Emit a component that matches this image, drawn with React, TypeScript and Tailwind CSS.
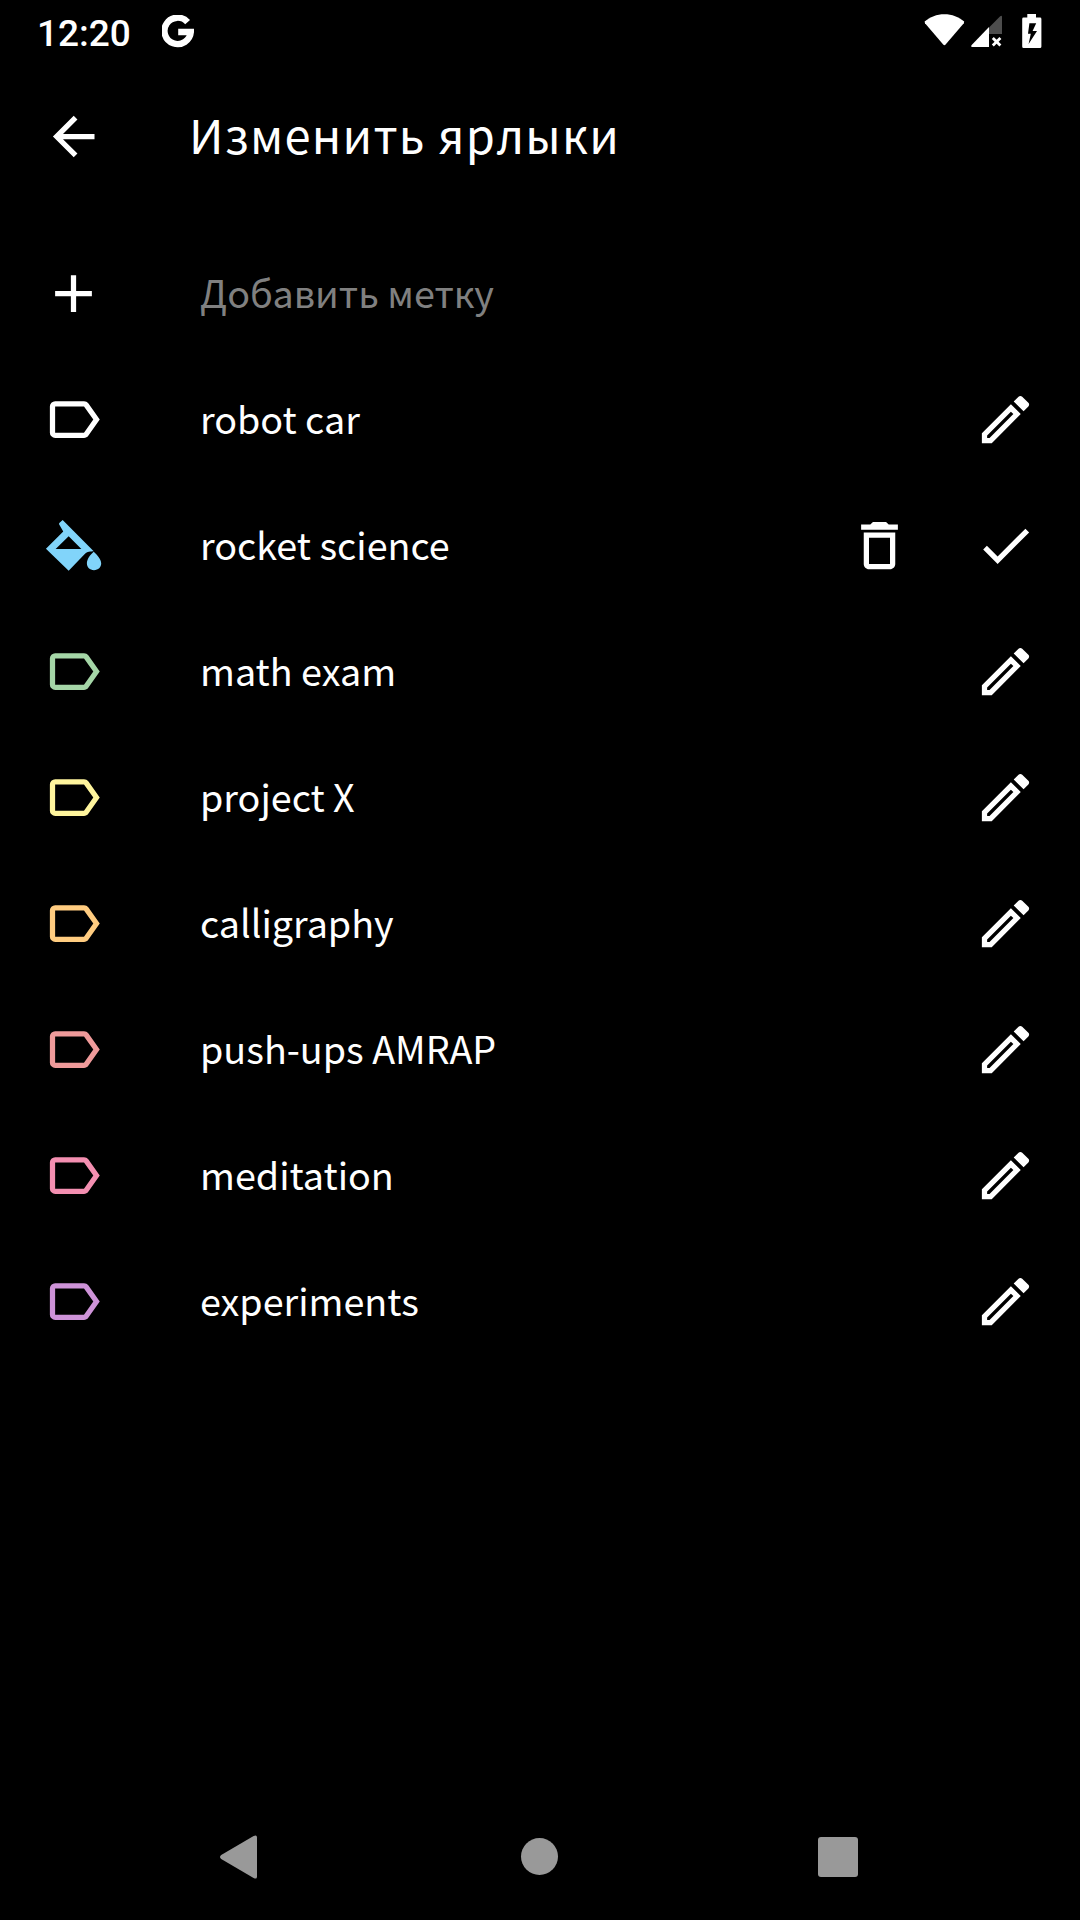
import React from 'react';

type Label = {
  name: string;
  color: string;
  active?: boolean;
};

const labels: Label[] = [
  { name: 'robot car', color: 'text-white' },
  { name: 'rocket science', color: 'text-[#81d4fa]', active: true },
  { name: 'math exam', color: 'text-[#a5d6a7]' },
  { name: 'project X', color: 'text-[#fff59d]' },
  { name: 'calligraphy', color: 'text-[#ffcc80]' },
  { name: 'push-ups AMRAP', color: 'text-[#ef9a9a]' },
  { name: 'meditation', color: 'text-[#f48fb1]' },
  { name: 'experiments', color: 'text-[#ce93d8]' },
];

const icons = {
  back: 'M20,11V13H8L13.5,18.5L12.08,19.92L4.16,12L12.08,4.08L13.5,5.5L8,11H20Z',
  plus: 'M19,13H13V19H11V13H5V11H11V5H13V11H19V13Z',
  label: 'M16,17H5V7H16L19.55,12M17.63,5.84C17.27,5.33 16.67,5 16,5H5A2,2 0 0,0 3,7V17A2,2 0 0,0 5,19H16C16.67,19 17.27,18.66 17.63,18.15L22,12L17.63,5.84Z',
  fill: 'M7.87,2.25L19.7,14.2C18.4,14.3 17.3,14.2 16.2,15.3L10.16,21.6L1.5,13.2L8.1,6.7L6.5,3.9Q6.4,3.6 6.7,3.3ZM10.16,8.5L5.2,13.3H15ZM19.7,14.4C21,15.6 22.55,17.2 22.55,18.8C22.55,20.4 21.4,21.4 19.8,21.4S17.1,20.4 17.1,18.8C17.1,17.2 18.4,15.5 19.7,14.4Z',
  edit: 'M14.06,9L15,9.94L5.92,19H5V18.08L14.06,9M17.66,3C17.41,3 17.15,3.1 16.96,3.29L15.13,5.12L18.88,8.87L20.71,7.04C21.1,6.65 21.1,6 20.71,5.63L18.37,3.29C18.17,3.09 17.92,3 17.66,3M14.06,6.19L3,17.25V21H6.75L17.81,9.94L14.06,6.19Z',
  trash: 'M6,19C6,20.1 6.9,21 8,21H16C17.1,21 18,20.1 18,19V7H6V19M8,9H16V19H8V9M15.5,4L14.5,3H9.5L8.5,4H5V6H19V4H15.5Z',
  check: 'M21,7L9,19L3.5,13.5L4.91,12.09L9,16.17L19.59,5.59L21,7Z',
};

function Icon({ name }: { name: keyof typeof icons }) {
  return (
    <svg viewBox="0 0 24 24" className="size-[63px] shrink-0" fill="currentColor" fillRule="evenodd">
      <path d={icons[name]} />
    </svg>
  );
}

function StatusBar() {
  return (
    <div className="flex h-[63px] shrink-0 items-start justify-between pl-[37px] pr-[38px]">
      <div className="flex items-start">
        <span className="w-[125px] pt-[11px] font-['Roboto',sans-serif] text-[37px] leading-[46px] font-medium">12:20</span>
        <svg viewBox="0 0 32 33" className="mt-[15px] h-[33px] w-8" fill="none" stroke="currentColor" strokeWidth="6.4">
          <path d="M25.6 7.2A13.2 13.2 0 1 0 28.8 17H16.2" />
        </svg>
      </div>
      <div className="flex items-start">
        <svg viewBox="0 0 41 32" className="mt-[14px] h-8 w-[41px]" fill="currentColor">
          <path d="M0.6 7.6C6 2.8 12.8 0.2 20.4 0.2S34.8 2.8 40.2 7.6L39.8 9.2 21.6 30.6Q20.4 31.9 19.2 30.6L1 9.2Z" />
        </svg>
        <svg viewBox="0 0 32 32" className="mt-[15px] ml-[6px] size-8" fill="currentColor">
          <path d="M31 1.8V19H18V12.5L29.2 1.3Q31 0 31 1.8Z" opacity="0.3" />
          <path d="M18 12V32H1.3Q-0.7 32 0.7 30Z" />
          <path d="M21.8 22.9L29.4 30.5M29.4 22.9L21.8 30.5" stroke="currentColor" strokeWidth="2.8" />
        </svg>
        <svg viewBox="0 0 20 34" className="mt-[14px] ml-[19px] h-[34px] w-5" fill="currentColor" fillRule="evenodd">
          <path d="M5.3 0H14V3.6H18Q19.4 3.6 19.4 5V32.4Q19.4 34 18 34H1.6Q0.2 34 0.2 32.4V5Q0.2 3.6 1.6 3.6H5.3ZM7.4 9.2L6 19.8H8.8L6.6 30 15 17H10.6L14.2 9.2Z" />
        </svg>
      </div>
    </div>
  );
}

function LabelRow({ label }: { label: Label }) {
  return (
    <div className="flex h-[126px] items-start pt-8 pr-[43px] pl-[42px]">
      <div className={label.color}>
        <Icon name={label.active ? 'fill' : 'label'} />
      </div>
      <span className="ml-[95px] flex-1 text-[37.7px] leading-[59px]">{label.name}</span>
      <div className="flex gap-[63px]">
        {label.active && <Icon name="trash" />}
        <Icon name={label.active ? 'check' : 'edit'} />
      </div>
    </div>
  );
}

export default function App() {
  return (
    <div className="flex h-[1920px] w-[1080px] flex-col overflow-hidden bg-black font-['Noto_Sans_CJK_SC',sans-serif] text-white">
      <StatusBar />

      <header className="flex h-[167px] shrink-0 items-start pt-[42px] pl-[42px]">
        <Icon name="back" />
        <h1 className="ml-[84px] text-[47px] leading-[57px] tracking-[1.25px]">Изменить ярлыки</h1>
      </header>

      <main className="flex-1">
        <div className="flex h-[126px] items-start pt-8 pl-[42px]">
          <Icon name="plus" />
          <span className="ml-[95px] text-[37.7px] leading-[59px] text-[#808080]">Добавить метку</span>
        </div>
        {labels.map(label => (
          <LabelRow key={label.name} label={label} />
        ))}
      </main>

      {/* System navigation */}
      <nav className="flex h-[126px] shrink-0 items-center pl-[219px] text-[#999999]">
        <svg viewBox="0 0 39 44" className="h-11 w-[39px]" fill="currentColor">
          <path d="M34.6 1Q38 -0.8 38 2.6V41.4Q38 44.8 34.6 43L2.2 24Q-0.2 22 2.2 20Z" />
        </svg>
        <div className="mb-px ml-[263px] size-[37px] rounded-full bg-current" />
        <div className="ml-[260px] size-10 rounded-[3px] bg-current" />
      </nav>
    </div>
  );
}
